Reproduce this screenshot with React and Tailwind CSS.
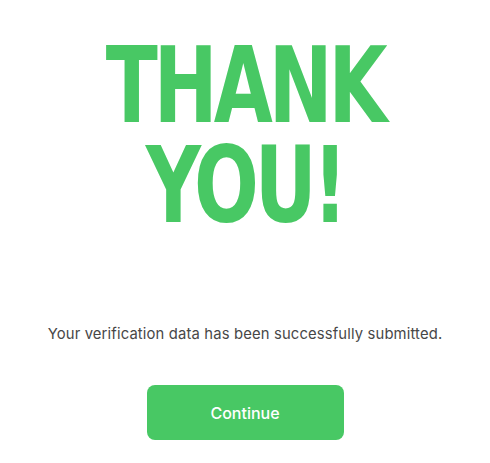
import React from 'react';

const App = () => {
  return (
    <div className="min-h-[463px] w-full bg-white flex flex-col items-center font-['Inter',sans-serif]">
      <h1 className="mt-[36px] text-center text-[#48c864] font-['DejaVu_Sans_Condensed','DejaVu_Sans',sans-serif] font-bold text-[106px] leading-[100px] tracking-[-5px] scale-x-[0.8]">
        THANK
        <br />
        YOU!
      </h1>
      <p className="mt-[87px] text-[14.8px] text-[#474747] tracking-[0.15px]">
        Your verification data has been successfully submitted.
      </p>
      <button
        type="button"
        className="mt-[40px] w-[197px] h-[55px] rounded-lg bg-[#48c864] text-white text-[16px] font-medium"
      >
        Continue
      </button>
    </div>
  );
};

export default App;
